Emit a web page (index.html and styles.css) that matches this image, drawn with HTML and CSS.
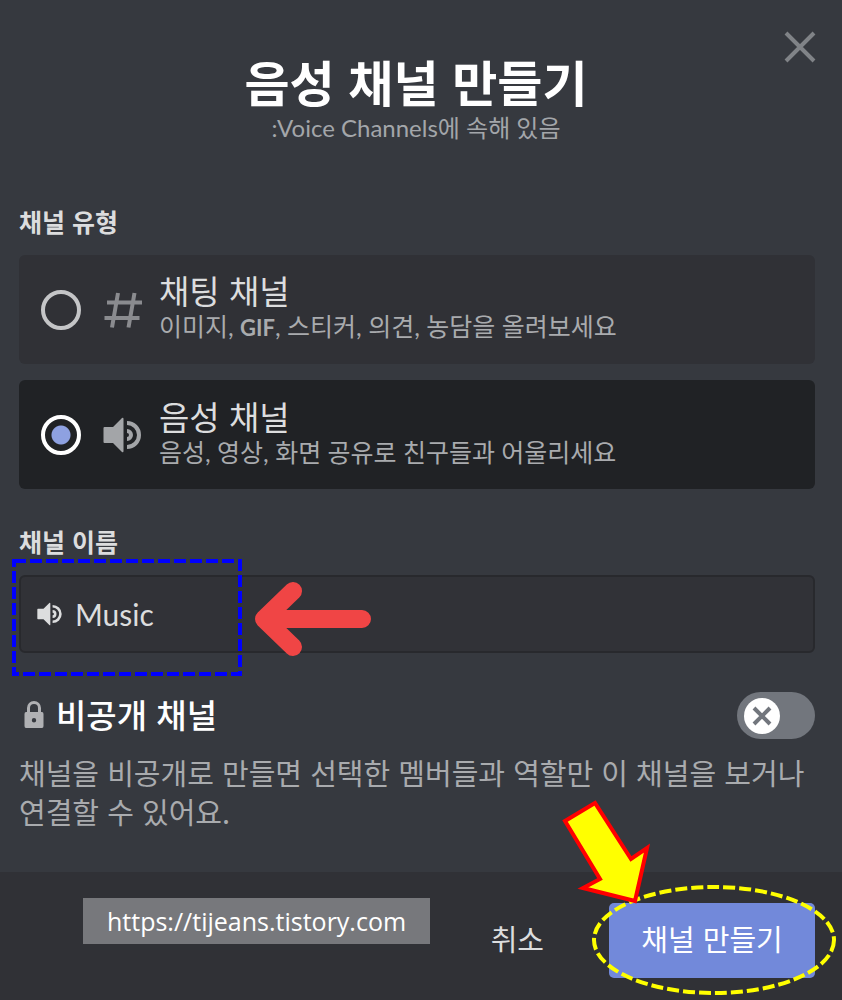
FILE: index.html
```
<!DOCTYPE html>
<html lang="ko">
<head>
    <meta charset="UTF-8">
    <meta name="viewport" content="width=device-width, initial-scale=1.0">
    <title>음성 채널 만들기</title>
    <link rel="stylesheet" href="styles.css">
</head>
<body>
    <form class="modal">
        <header class="modal-header">
            <h1>음성 채널 만들기</h1>
            <p>:Voice Channels에 속해 있음</p>
            <button type="button" class="close" aria-label="닫기">
                <svg width="34" height="34" viewBox="0 0 34 34"><path d="M3 3L31 31M31 3L3 31"/></svg>
            </button>
        </header>

        <main class="modal-body">
            <fieldset class="types">
                <legend class="label">채널 유형</legend>
                <label class="type">
                    <input type="radio" name="type" value="text">
                    <svg class="type-icon" width="40" height="40" viewBox="0 0 40 40">
                        <path class="hash" d="M4 12.500H39M1.500 28H36.500M15 3L9 37.500M31.500 3L25.500 37.500"/>
                    </svg>
                    <span class="type-text">
                        <span class="type-title">채팅 채널</span>
                        <span class="type-desc">이미지, <b>GIF</b>, 스티커, 의견, 농담을 올려보세요</span>
                    </span>
                </label>
                <label class="type">
                    <input type="radio" name="type" value="voice" checked>
                    <svg class="type-icon" width="40" height="40" viewBox="0 0 40 40">
                        <path d="M1.500 12Q0.500 12 0.500 13V27Q0.500 28 1.500 28H10L19 37Q20.500 38 20.500 36V4Q20.500 2 19 3L10 12Z"/>
                        <path d="M24 14A6 6 0 0 1 24 26V22A2 2 0 0 0 24 18Z"/>
                        <path d="M24 6A14 14 0 0 1 24 34V30A10 10 0 0 0 24 10Z"/>
                    </svg>
                    <span class="type-text">
                        <span class="type-title">음성 채널</span>
                        <span class="type-desc">음성, 영상, 화면 공유로 친구들과 어울리세요</span>
                    </span>
                </label>
            </fieldset>

            <div class="name">
                <label class="label" for="name">채널 이름</label>
                <div class="field">
                    <svg width="26" height="26" viewBox="0 0 40 40">
                        <path d="M1.500 12Q0.500 12 0.500 13V27Q0.500 28 1.500 28H10L19 37Q20.500 38 20.500 36V4Q20.500 2 19 3L10 12Z"/>
                        <path d="M24 14A6 6 0 0 1 24 26V22A2 2 0 0 0 24 18Z"/>
                        <path d="M24 6A14 14 0 0 1 24 34V30A10 10 0 0 0 24 10Z"/>
                    </svg>
                    <input type="text" id="name" name="name" value="Music">
                    <svg class="mark-box" width="230" height="118" viewBox="0 0 230 118">
                        <rect x="2" y="2" width="226" height="113"/>
                    </svg>
                    <svg class="mark-left" width="116" height="74" viewBox="0 0 116 74">
                        <path d="M9 37H107M38 9L9 37L38 65"/>
                    </svg>
                </div>
            </div>

            <div class="private">
                <label class="private-title" for="private">
                    <svg width="20" height="28" viewBox="0 0 20 28">
                        <path fill-rule="evenodd" d="M3 12V8A7 7 0 0 1 17 8V12H18Q19.500 12 19.500 14V26Q19.500 28 18 28H2Q0.500 28 0.500 26V14Q0.500 12 2 12ZM6 12H14V8A4 4 0 0 0 6 8ZM10 18A2.200 2.200 0 1 0 10 22.400A2.200 2.200 0 1 0 10 18Z"/>
                    </svg>
                    비공개 채널
                </label>
                <span class="switch">
                    <input type="checkbox" id="private" name="private">
                    <svg width="36" height="36" viewBox="0 0 36 36">
                        <circle cx="18" cy="18" r="18"/>
                        <path d="M10 10L26 26M26 10L10 26"/>
                    </svg>
                </span>
            </div>
            <p class="private-desc">채널을 비공개로 만들면 선택한 멤버들과 역할만 이 채널을 보거나 연결할 수 있어요.</p>
        </main>

        <footer class="modal-footer">
            <a class="blog" href="https://tijeans.tistory.com">https://tijeans.tistory.com</a>
            <button type="button" class="cancel">취소</button>
            <div class="submit-wrap">
                <button type="submit" class="submit">채널 만들기</button>
                <svg class="mark-submit" width="278" height="200" viewBox="0 0 278 200">
                    <ellipse cx="154" cy="140" rx="120" ry="53"/>
                    <path d="M5 21L35 3L71 59L87 48L75 101L23 88L40 79Z"/>
                </svg>
            </div>
        </footer>
    </form>
</body>
</html>
```
FILE: styles.css
```
* {
    box-sizing: border-box;
}
body {
    margin: 0;
    background: #36393f;
    color: #dcddde;
    font-family: "Noto Sans CJK KR", sans-serif;
}
button {
    padding: 0;
    border: none;
    background: none;
    color: inherit;
    font-family: inherit;
    cursor: pointer;
}
svg {
    display: block;
    flex: none;
}
.modal {
    display: flex;
    flex-direction: column;
    min-height: 100vh;
}

/* header */
.modal-header {
    position: relative;
    padding-top: 52px;
    text-align: center;
}
.modal-header h1 {
    margin: 0;
    padding-right: 10px;
    color: #fff;
    font-size: 49px;
    line-height: 58px;
}
.modal-header p {
    margin: 0;
    padding-right: 10px;
    color: #a3a6aa;
    font-family: Lato, "Noto Sans CJK KR", sans-serif;
    font-size: 24px;
    line-height: 36px;
}
.close {
    position: absolute;
    top: 30px;
    right: 25px;
}
.close svg {
    fill: none;
    stroke: #808387;
    stroke-width: 4;
}

/* body */
.modal-body {
    flex: 1;
    padding: 59px 27px 30px 19px;
}
.label {
    display: block;
    padding: 0;
    font-size: 25px;
    font-weight: bold;
    line-height: 32px;
}
.types {
    display: flow-root;
    margin: 0;
    padding: 0;
    border: none;
}
.types .label {
    margin-bottom: 2px;
}
.type {
    display: flex;
    align-items: center;
    height: 109px;
    margin-top: 16px;
    padding: 0 22px;
    border-radius: 6px;
    background: #303136;
}
.type:has(input:checked) {
    background: #202225;
}
.type input {
    appearance: none;
    flex: none;
    width: 40px;
    height: 40px;
    margin: 0;
    border: 4px solid #c4c5c7;
    border-radius: 50%;
}
.type input:checked {
    border-color: #fff;
    background: radial-gradient(circle, #8ea1e1 9px, transparent 10px);
}
.type-icon {
    margin: 0 16px 0 22px;
    fill: #a3a5a8;
}
.hash {
    fill: none;
    stroke: #8a8b8f;
    stroke-width: 4;
}
.type-text {
    display: flex;
    flex-direction: column;
    padding-bottom: 3px;
}
.type-title {
    font-size: 33px;
    line-height: 38px;
}
.type-desc {
    color: #a9abae;
    font-family: Lato, "Noto Sans CJK KR", sans-serif;
    font-size: 25px;
    line-height: 34px;
}
.type-desc b {
    font-size: 22px;
}
.name {
    margin-top: 36px;
}
.field {
    position: relative;
    display: flex;
    align-items: center;
    gap: 12px;
    height: 78px;
    margin-top: 18px;
    padding: 0 16px;
    border: 2px solid #28292d;
    border-radius: 6px;
    background: #313237;
    fill: #dcddde;
}
.field input {
    flex: 1;
    min-width: 0;
    padding: 0;
    border: none;
    outline: none;
    background: none;
    color: #dcddde;
    font-family: Lato, "Noto Sans CJK KR", sans-serif;
    font-size: 30px;
}
.private {
    display: flex;
    align-items: center;
    justify-content: space-between;
    margin-top: 39px;
}
.private-title {
    display: flex;
    align-items: center;
    gap: 12px;
    padding: 0 0 3px 5px;
    color: #fff;
    font-size: 33px;
    font-weight: 500;
    line-height: 44px;
}
.private-title svg {
    fill: #b0b1b4;
}
.switch {
    position: relative;
}
.switch input {
    appearance: none;
    display: block;
    width: 78px;
    height: 47px;
    margin: 0;
    border-radius: 24px;
    background: #72767d;
}
.switch svg {
    position: absolute;
    top: 6px;
    left: 7px;
    fill: #fff;
    stroke: none;
    pointer-events: none;
}
.switch path {
    stroke: #72767d;
    stroke-width: 4;
}
.private-desc {
    margin: 14px 0 0;
    color: #a9abae;
    font-size: 29px;
    line-height: 39px;
    word-break: keep-all;
}

/* footer */
.modal-footer {
    display: flex;
    align-items: center;
    min-height: 128px;
    padding: 9px 27px 0 83px;
    background: #303136;
}
.blog {
    align-self: flex-start;
    margin: 17px auto 0 0;
    padding: 0 24px;
    background: #77787c;
    color: #fff;
    font-family: "Open Sans", sans-serif;
    font-size: 25px;
    line-height: 46px;
    text-decoration: none;
}
.cancel,
.submit {
    height: 75px;
    padding-bottom: 5px;
    font-size: 29px;
}
.cancel {
    margin-right: 65px;
}
.submit-wrap {
    position: relative;
}
.submit {
    width: 206px;
    border-radius: 5px;
    background: #7289da;
    color: #fff;
}

/* drawn marks */
.mark-box,
.mark-left,
.mark-submit {
    position: absolute;
    pointer-events: none;
    fill: none;
}
.mark-box {
    top: -18px;
    left: -9px;
    stroke: #0000ff;
    stroke-width: 4;
    stroke-dasharray: 12 4;
}
.mark-left {
    top: 5px;
    left: 234px;
    stroke: #f04545;
    stroke-width: 18;
    stroke-linecap: round;
    stroke-linejoin: round;
}
.mark-submit {
    top: -103px;
    left: -49px;
}
.mark-submit ellipse {
    stroke: #ffff00;
    stroke-width: 4;
    stroke-dasharray: 12 4;
}
.mark-submit path {
    fill: #ffff00;
    stroke: #ff0000;
    stroke-width: 4;
}
```
